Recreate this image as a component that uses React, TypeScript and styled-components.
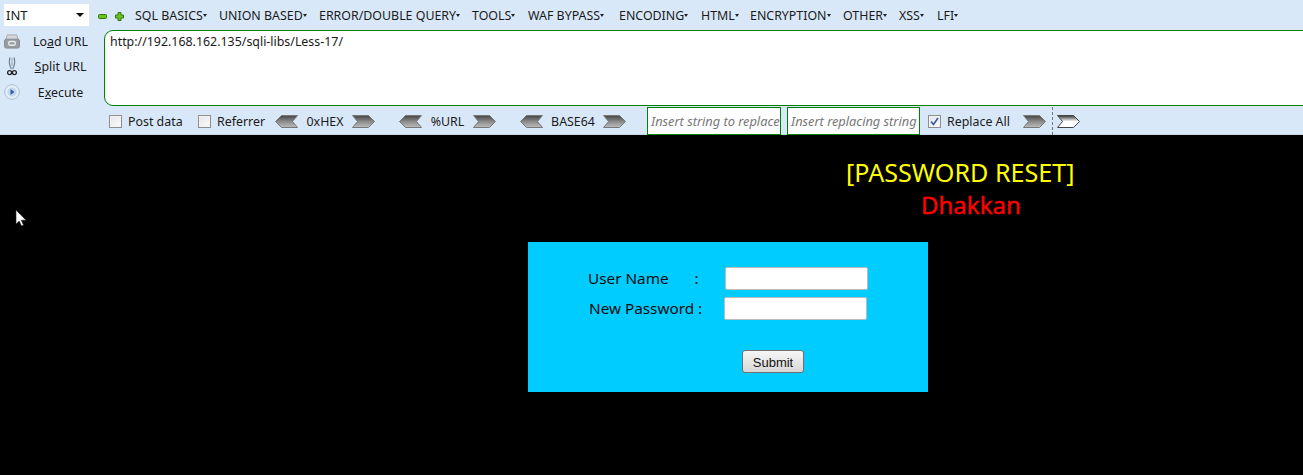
import styled, { createGlobalStyle } from "styled-components";

const MENU = [
  { label: "SQL BASICS", width: 84 },
  { label: "UNION BASED", width: 100 },
  { label: "ERROR/DOUBLE QUERY", width: 153 },
  { label: "TOOLS", width: 56 },
  { label: "WAF BYPASS", width: 91 },
  { label: "ENCODING", width: 82 },
  { label: "HTML", width: 49 },
  { label: "ENCRYPTION", width: 93 },
  { label: "OTHER", width: 56 },
  { label: "XSS", width: 38 },
  { label: "LFI", width: 30 },
];

const GlobalStyle = createGlobalStyle`
  html, body {
    margin: 0;
    padding: 0;
    background: #000;
    height: 100%;
    overflow: hidden;
  }
  * {
    box-sizing: border-box;
  }
`;

function Arrow({ dir, light }: { dir: "left" | "right"; light?: boolean }) {
  const id = `grad-${dir}-${light ? "l" : "d"}`;
  const points =
    dir === "left"
      ? "0.5,6.5 6.5,0.5 22.5,0.5 17.5,6.5 22.5,12.5 6.5,12.5"
      : "0.5,0.5 16.5,0.5 22.5,6.5 16.5,12.5 0.5,12.5 5.5,6.5";
  return (
    <svg width="23" height="13" viewBox="0 0 23 13">
      <defs>
        <linearGradient id={id} x1="0" y1="0" x2="0" y2="1">
          <stop offset="0" stopColor={light ? "#333333" : "#444444"} />
          <stop offset="0.5" stopColor={light ? "#ffffff" : "#8a8a8a"} />
          <stop offset="1" stopColor={light ? "#ffffff" : "#bdbdbd"} />
        </linearGradient>
      </defs>
      <polygon
        points={points}
        fill={`url(#${id})`}
        stroke={light ? "#444" : "#777"}
        strokeWidth="1"
      />
    </svg>
  );
}

function LoadIcon() {
  return (
    <svg width="17" height="15" viewBox="0 0 17 15">
      <path d="M3.5 .5h10l1.5 5H2z" fill="#d5d8db" stroke="#a4a8ad" />
      <rect x="0.5" y="5" width="16" height="9.5" rx="2" fill="#979ca1" stroke="#868b90" />
      <rect x="5" y="7.5" width="7" height="4" rx="1.5" fill="none" stroke="#eceef0" strokeWidth="1.4" />
    </svg>
  );
}

function ScissorsIcon() {
  return (
    <svg width="10" height="19" viewBox="0 0 10 19">
      <path d="M3 .5C1.8 4 2.6 9 4.4 12M7 .5C8.2 4 7.4 9 5.6 12" fill="none" stroke="#5f7486" strokeWidth="1.1" />
      <path d="M5 1v8" stroke="#a9b6c1" strokeWidth="1.4" />
      <circle cx="2.6" cy="15.6" r="2" fill="none" stroke="#222" strokeWidth="1.3" />
      <circle cx="7.4" cy="15.6" r="2" fill="none" stroke="#222" strokeWidth="1.3" />
    </svg>
  );
}

function ExecuteIcon() {
  return (
    <svg width="16" height="16" viewBox="0 0 16 16">
      <circle cx="8" cy="8" r="7.3" fill="#e6eef7" stroke="#a9bfd6" />
      <circle cx="8" cy="8" r="4.6" fill="#c4d7ee" />
      <path d="M6.5 5l4 3-4 3z" fill="#2f5fa5" />
    </svg>
  );
}

function ZoomIcon({ plus }: { plus?: boolean }) {
  return (
    <svg width="9" height="9" viewBox="0 0 9 9">
      {plus ? (
        <path d="M3 .5h3v2.5h2.5v3H6v2.5H3V6H.5V3H3z" fill="#6cc21c" stroke="#2f7a10" />
      ) : (
        <rect x="0.5" y="2.5" width="8" height="4" rx="1" fill="#6cc21c" stroke="#2f7a10" />
      )}
    </svg>
  );
}

function Check({ checked }: { checked?: boolean }) {
  return (
    <CheckBox>
      {checked && (
        <svg width="9" height="9" viewBox="0 0 9 9">
          <path d="M1 4.5l2.5 3L8 1" fill="none" stroke="#3a55a5" strokeWidth="1.6" />
        </svg>
      )}
    </CheckBox>
  );
}

export default function App() {
  return (
    <>
      <GlobalStyle />
      <Toolbar>
        <TopRow>
          <SelectBox>
            INT
            <SelectCaret />
          </SelectBox>
          <ZoomButtons>
            <ZoomIcon />
            <ZoomIcon plus />
          </ZoomButtons>
          <Menu>
            {MENU.map((item) => (
              <MenuItem key={item.label} $width={item.width}>
                {item.label}
                <SmallCaret />
              </MenuItem>
            ))}
          </Menu>
        </TopRow>
        <MiddleRow>
          <Actions>
            <ActionRow>
              <ActionIcon>
                <LoadIcon />
              </ActionIcon>
              <ActionLabel>
                Lo<u>a</u>d URL
              </ActionLabel>
            </ActionRow>
            <ActionRow>
              <ActionIcon>
                <ScissorsIcon />
              </ActionIcon>
              <ActionLabel>
                <u>S</u>plit URL
              </ActionLabel>
            </ActionRow>
            <ActionRow>
              <ActionIcon>
                <ExecuteIcon />
              </ActionIcon>
              <ActionLabel>
                E<u>x</u>ecute
              </ActionLabel>
            </ActionRow>
          </Actions>
          <UrlBox>http://192.168.162.135/sqli-libs/Less-17/</UrlBox>
        </MiddleRow>
        <BottomRow>
          <Option $width={89}>
            <Check />
            Post data
          </Option>
          <Option $width={77}>
            <Check />
            Referrer
          </Option>
          <Encoder $width={100} $gap={24}>
            <Arrow dir="left" />
            0xHEX
            <Arrow dir="right" />
          </Encoder>
          <Encoder $width={97} $gap={24}>
            <Arrow dir="left" />
            %URL
            <Arrow dir="right" />
          </Encoder>
          <Encoder $width={106} $gap={21}>
            <Arrow dir="left" />
            BASE64
            <Arrow dir="right" />
          </Encoder>
          <ReplaceInput $width={134} $gap={6}>
            Insert string to replace
          </ReplaceInput>
          <ReplaceInput $width={133} $gap={8}>
            Insert replacing string
          </ReplaceInput>
          <Option $width={95}>
            <Check checked />
            Replace All
          </Option>
          <Arrow dir="right" />
          <Divider />
          <Arrow dir="right" light />
        </BottomRow>
      </Toolbar>
      <Page>
        <Heading>[PASSWORD RESET]</Heading>
        <SubHeading>Dhakkan</SubHeading>
        <FormCard>
          <FieldRow $indent={60}>
            <FieldLabel $width={137}>
              User Name<Colon>:</Colon>
            </FieldLabel>
            <FieldInput />
          </FieldRow>
          <FieldRow $indent={61}>
            <FieldLabel $width={135}>New Password :</FieldLabel>
            <FieldInput />
          </FieldRow>
          <SubmitRow>
            <SubmitButton>Submit</SubmitButton>
          </SubmitRow>
        </FormCard>
      </Page>
      <Cursor width="12" height="19" viewBox="0 0 12 19">
        <path d="M1 1v14l3.2-3 2.3 5 2-1-2.2-4.8H11z" fill="#fff" stroke="#222" strokeWidth="0.6" />
      </Cursor>
    </>
  );
}

const Toolbar = styled.div`
  height: 135px;
  background: #d9e8f8;
  box-shadow: inset 0 -1px #c6d6e8;
  font-family: "Noto Sans", "Open Sans", sans-serif;
  font-size: 12.4px;
  color: #1a1a1a;
  overflow: hidden;
`;

const TopRow = styled.div`
  display: flex;
  align-items: flex-start;
  height: 30px;
  padding: 4px 0 0 4px;
`;

const SelectBox = styled.div`
  width: 85px;
  height: 22px;
  background: #fff;
  display: flex;
  align-items: center;
  justify-content: space-between;
  padding: 0 3px 0 2px;
  font-size: 13px;
`;

const SelectCaret = styled.span`
  width: 0;
  height: 0;
  border-left: 4px solid transparent;
  border-right: 4px solid transparent;
  border-top: 4px solid #111;
  margin-right: 2px;
`;

const ZoomButtons = styled.div`
  display: flex;
  align-items: center;
  height: 24px;
  gap: 8px;
  margin-left: 9px;
  width: 37px;
`;

const Menu = styled.div`
  display: flex;
`;

const MenuItem = styled.div<{ $width: number }>`
  width: ${({ $width }) => $width}px;
  height: 23px;
  white-space: nowrap;
  display: flex;
  align-items: center;
`;

const SmallCaret = styled.span`
  width: 0;
  height: 0;
  border-left: 2.5px solid transparent;
  border-right: 2.5px solid transparent;
  border-top: 3px solid #222;
`;

const MiddleRow = styled.div`
  display: flex;
  height: 76px;
`;

const Actions = styled.div`
  flex: none;
  width: 104px;
  display: flex;
  flex-direction: column;
  gap: 3.5px;
`;

const ActionRow = styled.div`
  display: flex;
  align-items: center;
  height: 22px;
  padding-left: 4px;
`;

const ActionIcon = styled.span`
  width: 16px;
  display: flex;
  justify-content: center;
`;

const ActionLabel = styled.span`
  width: 81px;
  text-align: center;
  white-space: nowrap;
`;

const UrlBox = styled.div`
  flex: none;
  width: 1220px;
  height: 76px;
  background: #fff;
  border: 1px solid #008000;
  border-radius: 9px;
  padding: 2px 5px;
  white-space: nowrap;
`;

const BottomRow = styled.div`
  display: flex;
  align-items: center;
  height: 30px;
  padding-left: 109px;
`;

const Option = styled.label<{ $width: number }>`
  display: flex;
  align-items: center;
  gap: 6px;
  width: ${({ $width }) => $width}px;
  white-space: nowrap;
`;

const CheckBox = styled.span`
  width: 13px;
  height: 13px;
  flex: none;
  display: flex;
  align-items: center;
  justify-content: center;
  border: 1px solid #8e8f8f;
  background: linear-gradient(135deg, #e6e6e6, #fbfbfb);
  box-shadow: inset 0 0 0 1px #f2f2f2;
`;

const Encoder = styled.div<{ $width: number; $gap: number }>`
  display: flex;
  align-items: center;
  justify-content: space-between;
  width: ${({ $width }) => $width}px;
  margin-right: ${({ $gap }) => $gap}px;
  white-space: nowrap;
`;

const ReplaceInput = styled.div<{ $width: number; $gap: number }>`
  width: ${({ $width }) => $width}px;
  height: 28px;
  margin-right: ${({ $gap }) => $gap}px;
  padding: 0 0 0 3px;
  line-height: 26px;
  background: #fff;
  border: 1px solid #008000;
  color: #777;
  font-size: 12.8px;
  font-style: italic;
  white-space: nowrap;
  overflow: hidden;
`;

const Divider = styled.span`
  height: 28px;
  margin: 0 4px 0 6px;
  border-left: 1px dashed #777;
`;

const Page = styled.main`
  display: flex;
  flex-direction: column;
  align-items: flex-start;
  font-family: "Noto Sans", "Open Sans", sans-serif;
`;

const Heading = styled.div`
  margin: 21px 0 0 846px;
  font-size: 25.1px;
  line-height: 33px;
  color: #ffff00;
  white-space: nowrap;
`;

const SubHeading = styled.div`
  margin: -1px 0 0 921px;
  font-size: 24px;
  line-height: 33px;
  color: #ff0000;
  -webkit-text-stroke: 0.4px #ff0000;
`;

const FormCard = styled.div`
  width: 400px;
  height: 150px;
  margin: 21px 0 0 528px;
  background: #00ccff;
  padding-top: 24px;
`;

const FieldRow = styled.div<{ $indent: number }>`
  display: flex;
  align-items: center;
  height: 24px;
  margin-bottom: 6px;
  padding-left: ${({ $indent }) => $indent}px;
`;

const FieldLabel = styled.span<{ $width: number }>`
  display: flex;
  width: ${({ $width }) => $width}px;
  font-size: 15.3px;
  color: #0a0a0a;
  white-space: nowrap;
`;

const Colon = styled.span`
  margin-left: 26px;
`;

const FieldInput = styled.input`
  width: 143px;
  height: 23px;
  padding: 0 2px;
  background: #fff;
  border: 1px solid #bcbcbc;
  border-radius: 2px;
`;

const SubmitRow = styled.div`
  display: flex;
  padding: 24px 0 0 214px;
`;

const SubmitButton = styled.button`
  width: 62px;
  height: 23px;
  padding: 1px 0 0;
  font-family: "Liberation Sans", Arial, sans-serif;
  font-size: 13px;
  color: #111;
  background: linear-gradient(#f6f6f6, #d8d8d8);
  border: 1px solid #707070;
  border-radius: 3px;
`;

const Cursor = styled.svg`
  position: absolute;
  left: 15px;
  top: 209px;
`;
